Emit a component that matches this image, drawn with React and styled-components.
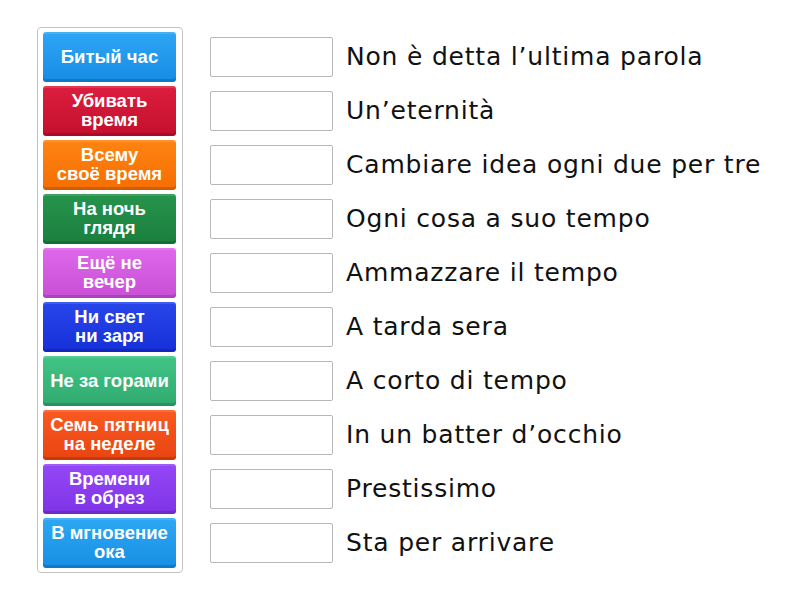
import React from 'react';
import styled, { createGlobalStyle } from 'styled-components';

const GlobalStyle = createGlobalStyle`
    body {
        margin: 0;
        background: #ffffff;
    }
`

const Page = styled.div`
    display: flex;
    align-items: flex-start;
    padding: 27px 0 0 37px;
    gap: 27px;
`

const TileColumn = styled.div`
    display: flex;
    flex-direction: column;
    gap: 4px;
    padding: 4px 6px 4px 5px;
    border: 1px solid #c4c4c4;
    border-radius: 4px;
`

const Tile = styled.div`
    width: 133px;
    height: 50px;
    box-sizing: border-box;
    display: flex;
    align-items: center;
    justify-content: center;
    text-align: center;
    border-radius: 3px;
    background: linear-gradient(${p => p.top}, ${p => p.bottom});
    box-shadow: inset 0 -3px 0 rgba(0, 0, 0, 0.15), inset 0 2px 0 rgba(255, 255, 255, 0.12);
    color: #ffffff;
    font-family: "Liberation Sans", Arial, sans-serif;
    font-weight: bold;
    font-size: 18.5px;
    line-height: 19px;
    padding: 0 1px 2px;
    white-space: nowrap;
`

const MatchColumn = styled.div`
    display: flex;
    flex-direction: column;
    gap: 4px;
    padding-top: 5px;
`

const MatchRow = styled.div`
    height: 50px;
    display: flex;
    align-items: center;
    gap: 13px;
`

const Slot = styled.div`
    width: 123px;
    height: 40px;
    box-sizing: border-box;
    border: 1px solid #b8b8b8;
    border-radius: 2px;
    background: #ffffff;
    flex-shrink: 0;
`

const Phrase = styled.span`
    font-family: "DejaVu Sans", sans-serif;
    font-size: 25px;
    letter-spacing: 0.8px;
    color: #111111;
    white-space: nowrap;
    padding-bottom: 2px;
`

const tiles = [
    { text: ['Битый час'], top: '#2ea6f4', bottom: '#168ce4' },
    { text: ['Убивать', 'время'], top: '#dc1e3e', bottom: '#c40f2e' },
    { text: ['Всему', 'своё время'], top: '#ff8412', bottom: '#f56e02' },
    { text: ['На ночь', 'глядя'], top: '#26944c', bottom: '#1a7f3e' },
    { text: ['Ещё не', 'вечер'], top: '#de68ea', bottom: '#c84fd6' },
    { text: ['Ни свет', 'ни заря'], top: '#2846ea', bottom: '#1630d8' },
    { text: ['Не за горами'], top: '#42c486', bottom: '#30ab70' },
    { text: ['Семь пятниц', 'на неделе'], top: '#fa5a22', bottom: '#e84410' },
    { text: ['Времени', 'в обрез'], top: '#9447f6', bottom: '#7e34e6' },
    { text: ['В мгновение', 'ока'], top: '#2ea8f4', bottom: '#168ee4' },
]

const phrases = [
    'Non è detta l’ultima parola',
    'Un’eternità',
    'Cambiare idea ogni due per tre',
    'Ogni cosa a suo tempo',
    'Ammazzare il tempo',
    'A tarda sera',
    'A corto di tempo',
    'In un batter d’occhio',
    'Prestissimo',
    'Sta per arrivare',
]

export default function App() {
    return (
        <>
            <GlobalStyle />
            <Page>
                <TileColumn>
                    {tiles.map((t, i) => (
                        <Tile key={i} top={t.top} bottom={t.bottom}>
                            <span>
                                {t.text.map((line, j) => (
                                    <React.Fragment key={j}>
                                        {j > 0 && <br />}
                                        {line}
                                    </React.Fragment>
                                ))}
                            </span>
                        </Tile>
                    ))}
                </TileColumn>
                <MatchColumn>
                    {phrases.map((p, i) => (
                        <MatchRow key={i}>
                            <Slot />
                            <Phrase>{p}</Phrase>
                        </MatchRow>
                    ))}
                </MatchColumn>
            </Page>
        </>
    )
}
